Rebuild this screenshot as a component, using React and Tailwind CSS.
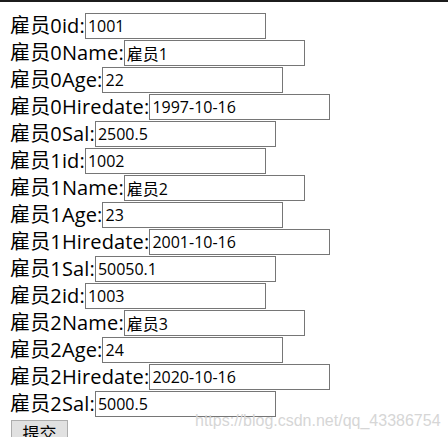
import React from 'react';

const employees = [
  { id: '1001', name: '雇员1', age: '22', hiredate: '1997-10-16', sal: '2500.5' },
  { id: '1002', name: '雇员2', age: '23', hiredate: '2001-10-16', sal: '50050.1' },
  { id: '1003', name: '雇员3', age: '24', hiredate: '2020-10-16', sal: '5000.5' },
];

const fields = ['id', 'Name', 'Age', 'Hiredate', 'Sal'];

const font = { fontFamily: '"Open Sans", "Noto Sans CJK SC", sans-serif' };

const Row = ({ label, value }) => (
  <div className="flex items-center h-[27px] whitespace-nowrap">
    <span className="text-[20px] leading-none tracking-[0.15px] text-black">{label}:</span>
    <input
      type="text"
      defaultValue={value}
      className="box-border w-[181px] h-[26px] border border-[#767676] bg-white pl-[2px] text-[16px] text-black outline-none"
      style={font}
    />
  </div>
);

export default function App() {
  return (
    <div className="relative w-[448px] h-[437px] overflow-hidden bg-white" style={font}>
      <div className="h-[2px] bg-[#1c1c1c]" />
      <form className="pl-[10px] pt-[10px]" onSubmit={(e) => e.preventDefault()}>
        {employees.map((emp, i) =>
          fields.map((f) => (
            <Row
              key={`${i}-${f}`}
              label={`雇员${i}${f}`}
              value={emp[f.toLowerCase()]}
            />
          ))
        )}
        <button
          type="submit"
          className="mt-[3px] ml-[1px] w-[57px] h-[26px] border border-[#adadad] bg-[#e1e1e1] text-[17px] leading-none text-black"
          style={font}
        >
          提交
        </button>
      </form>
      <div
        className="absolute left-[195px] top-[409px] text-[16px] text-[#d6d6d6] pointer-events-none"
        style={{ fontFamily: '"Liberation Sans", Arial, sans-serif' }}
      >
        https://blog.csdn.net/qq_43386754
      </div>
    </div>
  );
}
